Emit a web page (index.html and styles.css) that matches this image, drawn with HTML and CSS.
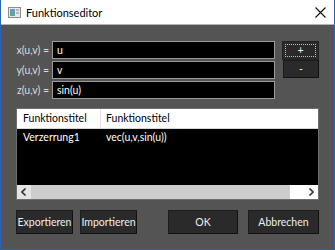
FILE: index.html
```html
<!DOCTYPE html>
<html lang="de">
<head>
  <meta charset="UTF-8">
  <title>Funktionseditor</title>
  <link rel="stylesheet" href="styles.css">
</head>
<body>
  <div class="fenster">
    <div class="titelleiste">
      <svg class="app-icon" width="13" height="11" viewBox="0 0 13 11">
        <rect x="0.5" y="0.5" width="12" height="10" fill="#e8e8e8" stroke="#8c8c8c"/>
        <rect x="2" y="2" width="5" height="7" fill="#6a9ab8"/>
        <rect x="3" y="5" width="3" height="4" fill="#5db070"/>
        <rect x="8" y="2" width="3" height="2" fill="#b8b8b8"/>
        <rect x="8" y="5" width="3" height="2" fill="#b8b8b8"/>
      </svg>
      <span class="titel">Funktionseditor</span>
      <svg class="schliessen" width="11" height="11" viewBox="0 0 11 11">
        <path d="M0.5 0.5 L10.5 10.5 M10.5 0.5 L0.5 10.5" stroke="#111" stroke-width="1.1"/>
      </svg>
    </div>

    <div class="inhalt">
      <div class="oben">
        <div class="felder">
          <label>x(u,v) =</label>
          <div class="eingabe">u</div>
          <label>y(u,v) =</label>
          <div class="eingabe">v</div>
          <label>z(u,v) =</label>
          <div class="eingabe">sin(u)</div>
        </div>
        <div class="plusminus">
          <button class="btn btn-plus"><span class="fokus">+</span></button>
          <button class="btn btn-minus">-</button>
        </div>
      </div>

      <div class="liste">
        <div class="kopf">
          <div class="spalte1">Funktionstitel</div>
          <div class="spalte2">Funktionstitel</div>
        </div>
        <div class="zeilen">
          <div class="zeile">
            <div class="spalte1">Verzerrung1</div>
            <div class="spalte2">vec(u,v,sin(u))</div>
          </div>
        </div>
        <div class="scrollleiste">
          <div class="pfeil links">
            <svg width="6" height="8" viewBox="0 0 6 8"><path d="M4.5 0.5 L1 4 L4.5 7.5" fill="none" stroke="#333" stroke-width="1.6"/></svg>
          </div>
          <div class="schiene"></div>
          <div class="pfeil rechts">
            <svg width="6" height="8" viewBox="0 0 6 8"><path d="M1.5 0.5 L5 4 L1.5 7.5" fill="none" stroke="#333" stroke-width="1.6"/></svg>
          </div>
        </div>
      </div>

      <div class="aktionen">
        <button class="btn btn-export">Exportieren</button>
        <button class="btn btn-import">Importieren</button>
        <div class="luecke"></div>
        <button class="btn btn-ok">OK</button>
        <button class="btn btn-abbrechen">Abbrechen</button>
      </div>
    </div>
  </div>
</body>
</html>
```

FILE: styles.css
```css
html, body {
  margin: 0;
  padding: 0;
  font-family: Lato, "Noto Sans", sans-serif;
  font-size: 10.5px;
}

.fenster {
  width: 335px;
  height: 250px;
  box-sizing: border-box;
  border: 1px solid #2d62b3;
  border-top: none;
  background: #545454;
  display: flex;
  flex-direction: column;
}

.titelleiste {
  height: 24px;
  background: #ffffff;
  border-bottom: 1px solid #b4b4b4;
  display: flex;
  align-items: center;
  padding: 0 8px 0 7px;
  flex-shrink: 0;
}

.app-icon {
  margin-right: 5px;
}

.titel {
  flex: 1;
  font-size: 11px;
  color: #000;
}

.inhalt {
  flex: 1;
  padding: 16px 15px 15px 15px;
  display: flex;
  flex-direction: column;
  color: #f0f0f0;
}

.oben {
  display: flex;
  align-items: flex-start;
}

.felder {
  flex: 1;
  display: grid;
  grid-template-columns: 33px 1fr;
  column-gap: 3px;
  row-gap: 1px;
  margin-right: 7px;
}

.felder label {
  text-align: right;
  line-height: 19px;
  white-space: nowrap;
  color: #dcdcdc;
}

.eingabe {
  height: 18px;
  box-sizing: border-box;
  background: #000;
  border: 1px solid #9a9a9a;
  color: #fff;
  line-height: 16px;
  padding-left: 4px;
}

.plusminus {
  width: 37px;
  display: flex;
  flex-direction: column;
}

.btn {
  background: #2a2a2a;
  color: #eeeeee;
  border: 1px solid #1c1c1c;
  border-right-color: #111;
  border-bottom-color: #111;
  font-family: Lato, "Noto Sans", sans-serif;
  font-size: 10.5px;
  padding: 0;
  box-sizing: border-box;
}

.btn-plus {
  height: 19px;
  border: 1px solid #222;
  display: flex;
  align-items: stretch;
  padding: 2px;
}

.fokus {
  flex: 1;
  border: 1px dotted #bdbdbd;
  line-height: 11px;
}

.btn-minus {
  height: 18px;
  line-height: 14px;
  margin-left: 1px;
  width: 36px;
}

.liste {
  margin-top: 8px;
  height: 92px;
  box-sizing: border-box;
  border: 1px solid #6e6e6e;
  background: #000;
  display: flex;
  flex-direction: column;
}

.kopf {
  height: 19px;
  background: #fff;
  color: #000;
  display: flex;
  border-bottom: 1px solid #d8d8d8;
  flex-shrink: 0;
}

.kopf .spalte1 {
  border-right: 1px solid #e2e2e2;
}

.spalte1 {
  width: 77px;
  padding-left: 6px;
  line-height: 19px;
}

.spalte2 {
  padding-left: 5px;
  line-height: 19px;
}

.zeilen {
  flex: 1;
}

.zeile {
  display: flex;
  color: #fff;
}

.zeile .spalte1 {
  width: 78px;
  line-height: 16px;
}

.zeile .spalte2 {
  line-height: 16px;
}

.scrollleiste {
  height: 14px;
  display: flex;
  background: #cdcdcd;
  flex-shrink: 0;
}

.pfeil {
  display: flex;
  align-items: center;
  justify-content: center;
}

.pfeil.links {
  width: 14px;
  background: #e4e4e4;
}

.schiene {
  flex: 1;
}

.pfeil.rechts {
  width: 28px;
  background: #ffffff;
  justify-content: flex-end;
  padding-right: 4px;
  box-sizing: border-box;
}

.aktionen {
  margin-top: auto;
  display: flex;
  gap: 7px;
}

.aktionen .btn {
  height: 24px;
}

.btn-export, .btn-import {
  width: 57px;
}

.luecke {
  flex: 1;
}

.btn-ok {
  width: 70px;
  margin-right: 3px;
}

.btn-abbrechen {
  width: 71px;
}
```
